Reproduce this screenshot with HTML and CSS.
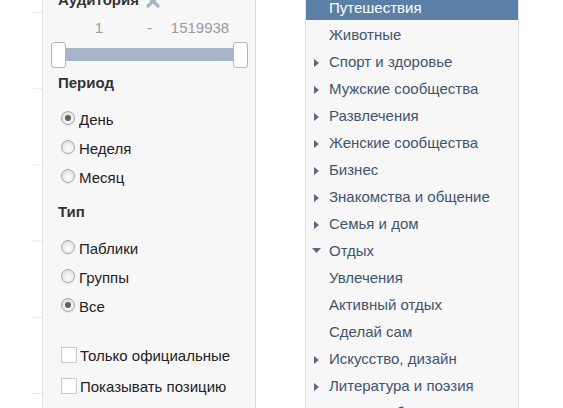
FILE: index.html
```html
<!DOCTYPE html>
<html lang="ru">
<head>
<meta charset="utf-8">
<title>Фильтры</title>
<link rel="stylesheet" href="styles.css">
</head>
<body>
<div class="page">
  <div class="gutter"></div>
  <aside class="filters">
    <div class="filter-head">
      <span class="title">Аудитория</span>
      <svg class="clear" width="14" height="14" viewBox="0 0 14 14"><path d="M2 2 L12 12 M12 2 L2 12" stroke="#a3b3c9" stroke-width="3.2" stroke-linecap="round"/></svg>
    </div>
    <div class="range-values"><span>1</span><span>-</span><span>1519938</span></div>
    <div class="slider"><span class="handle"></span><span class="handle"></span></div>

    <div class="group-title">Период</div>
    <label class="opt"><span class="radio checked"></span>День</label>
    <label class="opt"><span class="radio"></span>Неделя</label>
    <label class="opt"><span class="radio"></span>Месяц</label>

    <div class="group-title type">Тип</div>
    <label class="opt"><span class="radio"></span>Паблики</label>
    <label class="opt"><span class="radio"></span>Группы</label>
    <label class="opt"><span class="radio checked"></span>Все</label>

    <label class="check first"><span class="box"></span>Только официальные</label>
    <label class="check"><span class="box"></span>Показывать позицию</label>
    <div class="button"></div>
  </aside>

  <nav class="categories">
    <ul>
      <li class="active"><span class="slot"></span>Путешествия</li>
      <li><span class="slot"></span>Животные</li>
      <li><span class="slot"><svg viewBox="0 0 10 10"><path d="M2 1 L7 5 L2 9 Z"/></svg></span>Спорт и здоровье</li>
      <li><span class="slot"><svg viewBox="0 0 10 10"><path d="M2 1 L7 5 L2 9 Z"/></svg></span>Мужские сообщества</li>
      <li><span class="slot"><svg viewBox="0 0 10 10"><path d="M2 1 L7 5 L2 9 Z"/></svg></span>Развлечения</li>
      <li><span class="slot"><svg viewBox="0 0 10 10"><path d="M2 1 L7 5 L2 9 Z"/></svg></span>Женские сообщества</li>
      <li><span class="slot"><svg viewBox="0 0 10 10"><path d="M2 1 L7 5 L2 9 Z"/></svg></span>Бизнес</li>
      <li><span class="slot"><svg viewBox="0 0 10 10"><path d="M2 1 L7 5 L2 9 Z"/></svg></span>Знакомства и общение</li>
      <li><span class="slot"><svg viewBox="0 0 10 10"><path d="M2 1 L7 5 L2 9 Z"/></svg></span>Семья и дом</li>
      <li><span class="slot"><svg viewBox="0 0 10 10"><path d="M0 1 L9 1 L4.5 6 Z"/></svg></span>Отдых</li>
      <li><span class="slot"></span>Увлечения</li>
      <li><span class="slot"></span>Активный отдых</li>
      <li><span class="slot"></span>Сделай сам</li>
      <li><span class="slot"><svg viewBox="0 0 10 10"><path d="M2 1 L7 5 L2 9 Z"/></svg></span>Искусство, дизайн</li>
      <li><span class="slot"><svg viewBox="0 0 10 10"><path d="M2 1 L7 5 L2 9 Z"/></svg></span>Литература и поэзия</li>
      <li><span class="slot"><svg viewBox="0 0 10 10"><path d="M2 1 L7 5 L2 9 Z"/></svg></span>Наука и образование</li>
    </ul>
  </nav>
</div>
</body>
</html>
```
FILE: styles.css
```css
html, body {
  margin: 0;
  padding: 0;
  background: #fff;
  height: 408px;
  overflow: hidden;
}
body {
  font-family: "Liberation Sans", Arial, sans-serif;
  font-size: 15px;
  color: #222;
}
.page {
  display: flex;
  align-items: flex-start;
  height: 408px;
  overflow: hidden;
}
.gutter {
  margin-left: 33px;
  width: 9px;
  height: 408px;
  background-repeat: repeat-y;
  background-position: 0 12px;
  background-size: 100% 76.2px;
  background-image: linear-gradient(to bottom, #e6e6e6 0, #e6e6e6 1px, transparent 1px, transparent 100%);
}
.filters {
  width: 212px;
  box-sizing: content-box;
  background: #f7f7f7;
  border-left: 1px solid #e6e6ea;
  border-right: 1px solid #d6dae6;
  margin-top: -10px;
  padding-bottom: 40px;
  display: flex;
  flex-direction: column;
}
.filter-head {
  display: flex;
  align-items: center;
  padding-left: 15px;
  height: 20px;
  line-height: 20px;
}
.title {
  font-weight: bold;
  color: #333;
}
.clear {
  margin-left: 7px;
  margin-top: 2px;
}
.range-values {
  display: grid;
  grid-template-columns: 1fr auto 1fr;
  margin: 9px 7px 0 8px;
  font-size: 15px;
  line-height: 18px;
  color: #9a9a9a;
  text-align: center;
}
.slider {
  margin: 5px 7px 0 8px;
  height: 26px;
  display: flex;
  justify-content: space-between;
  background-image: linear-gradient(#a6b5c8, #a6b5c8);
  background-repeat: no-repeat;
  background-size: calc(100% - 16px) 13px;
  background-position: 8px 6px;
}
.handle {
  width: 13px;
  height: 24px;
  background: #fff;
  border: 1px solid #b5b5b5;
  border-radius: 3px;
}
.group-title {
  margin-top: 5px;
  padding-left: 15px;
  font-weight: bold;
  color: #333;
  line-height: 20px;
}
.group-title.type {
  margin-top: 14px;
}
.opt {
  display: flex;
  align-items: flex-start;
  padding-left: 18px;
  line-height: 20px;
  height: 20px;
  margin-top: 9px;
}
.group-title + .opt {
  margin-top: 17px;
}
.radio {
  width: 12px;
  height: 12px;
  margin-top: 1px;
  margin-right: 4px;
  border-radius: 50%;
  border: 1px solid #a8a8a8;
  background: radial-gradient(circle at 55% 65%, #fbfbfb 0, #eeeeee 45%, #cfcfcf 100%);
  box-shadow: 0 1px 1px rgba(0, 0, 0, 0.08);
  display: flex;
  align-items: center;
  justify-content: center;
}
.radio.checked::after {
  content: "";
  width: 6px;
  height: 6px;
  border-radius: 50%;
  background: #606060;
}
.check {
  display: flex;
  align-items: flex-start;
  padding-left: 18px;
  line-height: 20px;
  height: 20px;
  margin-top: 11px;
}
.check.first {
  margin-top: 29px;
}
.box {
  width: 16px;
  height: 16px;
  margin-top: 1px;
  margin-right: 3px;
  background: #fff;
  border: 1px solid #c8c8c8;
  box-sizing: border-box;
}
.button {
  margin: 11px 13px 0 15px;
  height: 20px;
  border-top: 1px solid #d0d0d0;
}
.categories {
  margin-left: 49px;
  width: 212px;
  background: #f7f7f7;
  border-left: 1px solid #dfe2ea;
  border-right: 1px solid #dfe2ea;
  margin-top: -7px;
  height: 460px;
}
.categories ul {
  list-style: none;
  margin: 0;
  padding: 0;
}
.categories li {
  display: flex;
  align-items: flex-start;
  height: 27px;
  box-sizing: border-box;
  padding-top: 2px;
  padding-left: 6px;
  line-height: 25px;
  color: #3f556f;
  white-space: nowrap;
}
.categories li.active {
  background: #5b7fa7;
  color: #fff;
}
.slot {
  width: 17px;
  flex: none;
  height: 10px;
}
.slot svg {
  display: block;
  width: 10px;
  height: 10px;
  margin-top: 9px;
  fill: #5a6a7e;
}
```
